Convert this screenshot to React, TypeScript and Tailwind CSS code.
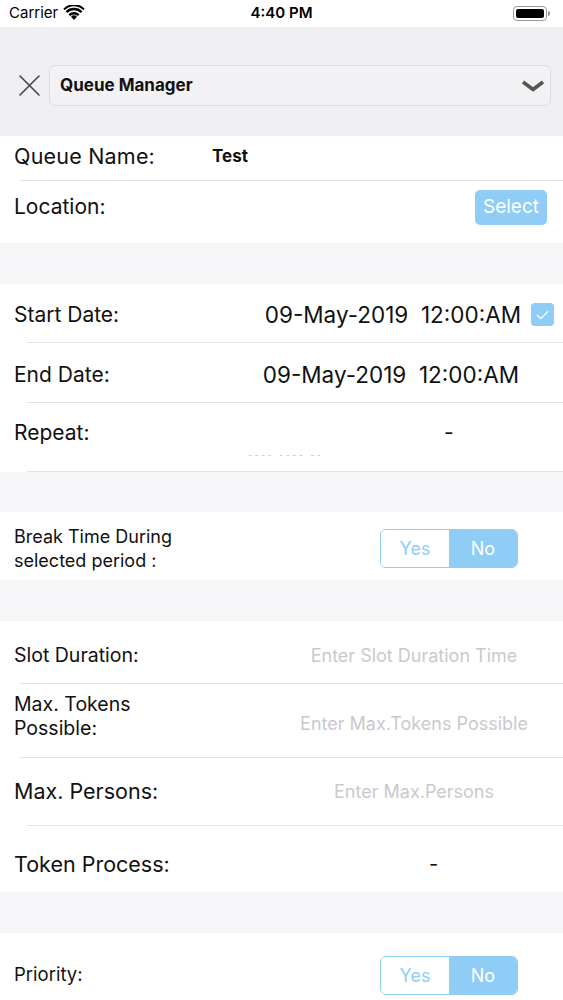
import { ReactNode } from 'react';

const font = "font-['Inter','Liberation_Sans',sans-serif]";

function StatusBar() {
  return (
    <div className="h-[27px] bg-white flex items-center px-[9px] relative">
      <span className="text-[15px] text-black">Carrier</span>
      <svg width="22" height="16" viewBox="0 0 20 15" className="ml-[5px] mt-[-1px]">
        <path d="M10 14 L7.2 11 A4 4 0 0 1 12.8 11 Z" fill="#000" />
        <path d="M4.8 8.6 A7.4 7.4 0 0 1 15.2 8.6 L13.6 10.3 A5.2 5.2 0 0 0 6.4 10.3 Z" fill="#000" />
        <path d="M2.2 5.9 A11 11 0 0 1 17.8 5.9 L16.3 7.5 A8.8 8.8 0 0 0 3.7 7.5 Z" fill="#000" />
        <path d="M0 3.4 A14 14 0 0 1 20 3.4 L18.7 4.8 A12.2 12.2 0 0 0 1.3 4.8 Z" fill="#000" />
      </svg>
      <span className="absolute left-1/2 -translate-x-1/2 text-[15px] font-semibold text-black">4:40 PM</span>
      <div className="ml-auto mr-[4px] flex items-center">
        <div className="w-[34px] h-[15px] rounded-[4px] border border-[#9a9a9a] p-[2px]">
          <div className="w-full h-full rounded-[2px] bg-black" />
        </div>
        <div className="w-[2px] h-[5px] bg-[#9a9a9a] rounded-r-sm ml-[1px]" />
      </div>
    </div>
  );
}

function Row({ h, children, line = 0, className = '' }: { h: number; children: ReactNode; line?: number; className?: string }) {
  return (
    <div className="relative" style={{ height: h }}>
      <div className={`h-full flex items-center pl-[14px] pr-[10px] ${className}`}>{children}</div>
      {line > 0 && <div className="absolute bottom-0 right-0 h-px bg-[#e3e3e6]" style={{ left: line }} />}
    </div>
  );
}

function Gap() {
  return <div className="h-[41px] bg-[#f6f6f8]" />;
}

function Toggle() {
  return (
    <div className="flex w-[138px] h-[39px] rounded-[6px] border border-[#8fcdf7] overflow-hidden text-[18px]">
      <div className="flex-1 flex items-center justify-center bg-white text-[#8fcdf7]">Yes</div>
      <div className="flex-1 flex items-center justify-center bg-[#8fcdf7] text-white">No</div>
    </div>
  );
}

function Placeholder({ children }: { children: ReactNode }) {
  return <span className="absolute left-[414px] -translate-x-1/2 text-[18px] text-[#c9c9ce] whitespace-nowrap">{children}</span>;
}

export default function App() {
  return (
    <div className={`w-[563px] h-[1000px] overflow-hidden bg-[#f6f6f8] text-[#111] ${font}`}>
      <StatusBar />

      {/* title bar with module picker */}
      <div className="h-[109px] bg-[#f0eff3] pt-[38px] pl-[18px] pr-[12px] flex items-start gap-[8px]">
        <svg width="23" height="23" viewBox="0 0 23 23" className="mt-[9px] shrink-0">
          <path d="M2 2 L21 21 M21 2 L2 21" stroke="#444" strokeWidth="1.6" strokeLinecap="round" />
        </svg>
        <div className="flex-1 h-[41px] rounded-[6px] border border-[#dcdce0] bg-[#f2f2f5] flex items-center pl-[10px] pr-[5px]">
          <span className="text-[17px] font-bold text-[#111]">Queue Manager</span>
          <svg width="24" height="12" viewBox="0 0 24 12" className="ml-auto">
            <path d="M2 2 L12 9.5 L22 2" fill="none" stroke="#555" strokeWidth="3.6" strokeLinejoin="miter" />
          </svg>
        </div>
      </div>

      <div className="bg-white">
        <Row h={45} line={20} className="pb-[4px]">
          <span className="text-[21.5px] w-[198px] tracking-[0.2px]">Queue Name:</span>
          <span className="text-[17px] font-bold">Test</span>
        </Row>
        <Row h={62} className="pb-[10px]">
          <span className="text-[21px]">Location:</span>
          <button className="ml-auto mr-[6px] w-[72px] h-[35px] rounded-[5px] bg-[#8fcdf7] text-white text-[19px]">Select</button>
        </Row>
      </div>

      <Gap />

      <div className="bg-white">
        <Row h={59} line={27} className="pt-[2px]">
          <span className="text-[21px]">Start Date:</span>
          <span className="ml-auto text-[22.5px] whitespace-pre">09-May-2019  12:00:AM</span>
          <div className="ml-[10px] mr-[-1px] w-[23px] h-[23px] rounded-[4px] bg-[#8fcdf7] flex items-center justify-center">
            <svg width="13" height="10" viewBox="0 0 13 10">
              <path d="M1 5 L4.8 8.6 L12 1.2" fill="none" stroke="#fff" strokeWidth="1.3" />
            </svg>
          </div>
        </Row>
        <Row h={60} line={27} className="pt-[4px]">
          <span className="text-[21px]">End Date:</span>
          <span className="ml-auto mr-[34px] text-[22.5px] whitespace-pre">09-May-2019  12:00:AM</span>
        </Row>
        <Row h={69} line={27} className="items-start pt-[14px]">
          <span className="text-[21px]">Repeat:</span>
          <span className="absolute left-[444px] top-[14px] text-[21px]">-</span>
          <span className="absolute left-[248px] top-[45px] text-[9px] tracking-[2.4px] text-[#c4c4c8]">----  ----  --</span>
        </Row>
      </div>

      <div className="h-[40px]" />

      <div className="bg-white">
        <Row h={68} className="pt-[5px]">
          <span className="text-[18px] leading-[24px] w-[366px]">Break Time During<br />selected period :</span>
          <Toggle />
        </Row>
      </div>

      <Gap />

      <div className="bg-white">
        <Row h={63} line={20} className="pt-[6px]">
          <span className="text-[19.5px]">Slot Duration:</span>
          <Placeholder>Enter Slot Duration Time</Placeholder>
        </Row>
        <Row h={74} line={20} className="pb-[10px]">
          <span className="text-[19.5px] leading-[24px]">Max. Tokens<br />Possible:</span>
          <span className="absolute left-[414px] top-[26px] -translate-x-1/2 text-[18px] text-[#c9c9ce] whitespace-nowrap">Enter Max.Tokens Possible</span>
        </Row>
        <Row h={68} line={27} className="pb-[2px]">
          <span className="text-[21.5px]">Max. Persons:</span>
          <Placeholder>Enter Max.Persons</Placeholder>
        </Row>
        <Row h={66} className="pt-[10px]">
          <span className="text-[21.5px]">Token Process:</span>
          <span className="absolute left-[429px] text-[20px]">-</span>
        </Row>
      </div>

      <Gap />

      <div className="bg-white h-[67px]">
        <Row h={84}>
          <span className="text-[18.5px] w-[366px]">Priority:</span>
          <Toggle />
        </Row>
      </div>
    </div>
  );
}
